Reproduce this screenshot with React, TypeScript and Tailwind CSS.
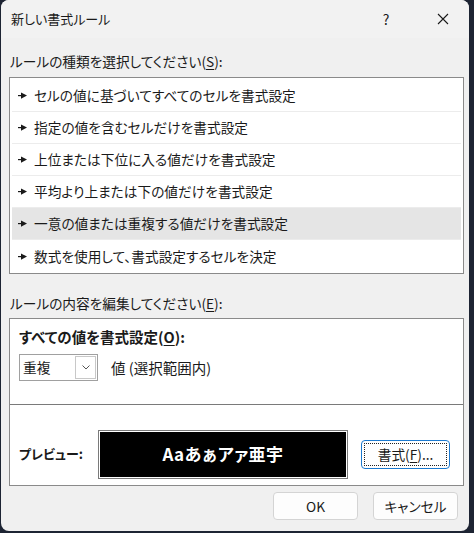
import React from "react";

const ruleTypes = [
  "セルの値に基づいてすべてのセルを書式設定",
  "指定の値を含むセルだけを書式設定",
  "上位または下位に入る値だけを書式設定",
  "平均より上または下の値だけを書式設定",
  "一意の値または重複する値だけを書式設定",
  "数式を使用して、書式設定するセルを決定",
];

const font = "font-['Segoe_UI','Noto_Sans_CJK_JP',sans-serif] [font-feature-settings:'palt']";

// small pointer drawn in front of each rule type
const Pointer = () => (
  <svg width="9" height="7" viewBox="0 0 9 7" className="shrink-0">
    <rect x="0" y="3" width="4" height="1.2" fill="#1a1a1a" />
    <polygon points="3,0.5 9,3.6 3,6.7" fill="#1a1a1a" />
  </svg>
);

export default function App() {
  const selected = 4;

  return (
    <div className={`w-[474px] h-[533px] bg-[#1d2433] pl-[1px] ${font} text-[13.7px] text-[#1a1a1a]`}>
      <div className="w-[468px] h-[531px] bg-[#f0f0f0] rounded-lg overflow-hidden flex flex-col">
        {/* title bar */}
        <div className="h-[38px] flex items-center pl-[10px] bg-[#f2f2f2]">
          <span className="flex-1 text-[13px]">新しい書式ルール</span>
          <span className="w-[14px] text-center text-[14px] mr-[44px]">?</span>
          <svg width="12" height="12" viewBox="0 0 12 12" className="mr-[20px]">
            <path d="M1 1 L11 11 M11 1 L1 11" stroke="#1a1a1a" strokeWidth="1.1" />
          </svg>
        </div>

        <div className="px-[8px] flex flex-col">
          <div className="h-[39px] flex items-end pb-[6px] pl-[1px] leading-[20px]">
            ルールの種類を選択してください(<span className="underline underline-offset-2">S</span>):
          </div>

          {/* rule type list */}
          <div className="w-[455px] border border-[#8a8a8a] bg-white px-[2px] pt-[2px] pb-[1px]">
            {ruleTypes.map((t, i) => (
              <div
                key={t}
                className={`h-[32px] flex items-center gap-[7px] pl-[6px] ${
                  i === selected ? "bg-[#e5e5e5]" : ""
                } ${i < ruleTypes.length - 1 ? "border-b border-[#ececec]" : ""}`}
              >
                <Pointer />
                <span>{t}</span>
              </div>
            ))}
          </div>

          <div className="h-[44px] flex items-end pb-[5px] pl-[1px] leading-[20px]">
            ルールの内容を編集してください(<span className="underline underline-offset-2">E</span>):
          </div>

          {/* rule description */}
          <div className="w-[455px] h-[168px] border border-[#8a8a8a] bg-white flex flex-col">
            <div className="h-[86px] border-b border-[#7a7a7a] px-[9px] pt-[9px]">
              <div className="font-bold leading-[18px] text-[14.5px]">
                すべての値を書式設定(<span className="underline underline-offset-2">O</span>):
              </div>
              <div className="flex items-center mt-[8px]">
                <div className="w-[79px] h-[27px] border border-[#a0a0a0] flex items-center pl-[3px]">
                  <span className="flex-1">重複</span>
                  <div className="w-[21px] h-[23px] border border-[#c8c8c8] mr-[1px] flex items-center justify-center">
                    <svg width="8" height="5" viewBox="0 0 8 5">
                      <path d="M0.5 0.5 L4 4 L7.5 0.5" stroke="#555" fill="none" />
                    </svg>
                  </div>
                </div>
                <span className="ml-[13px] text-[14.5px]">値 (選択範囲内)</span>
              </div>
            </div>

            <div className="flex-1 flex items-center pl-[9px] pt-[18px]">
              <span className="font-bold w-[79px] text-[13px]">プレビュー:</span>
              <div className="w-[250px] h-[49px] border border-[#7a7a7a] p-[1px] bg-white">
                <div className="w-full h-full bg-black flex items-center justify-center text-white font-bold text-[17px] tracking-[0.5px]">
                  Aaあぁアァ亜宇
                </div>
              </div>
              <div className="ml-[13px] w-[89px] h-[29px] rounded-[4px] border border-[#1c7ad0] p-[2px]">
                <div className="w-full h-full border border-dotted border-[#222] flex items-center justify-center">
                  書式(<span className="underline underline-offset-2">F</span>)...
                </div>
              </div>
            </div>
          </div>

          {/* footer buttons */}
          <div className="flex justify-end gap-[15px] mt-[6px] pr-[3px]">
            <button className="w-[85px] h-[28px] rounded-[4px] border border-[#d4d4d4] bg-[#fdfdfd]">
              OK
            </button>
            <button className="w-[85px] h-[28px] rounded-[4px] border border-[#d4d4d4] bg-[#fdfdfd]">
              キャンセル
            </button>
          </div>
        </div>
      </div>
    </div>
  );
}
